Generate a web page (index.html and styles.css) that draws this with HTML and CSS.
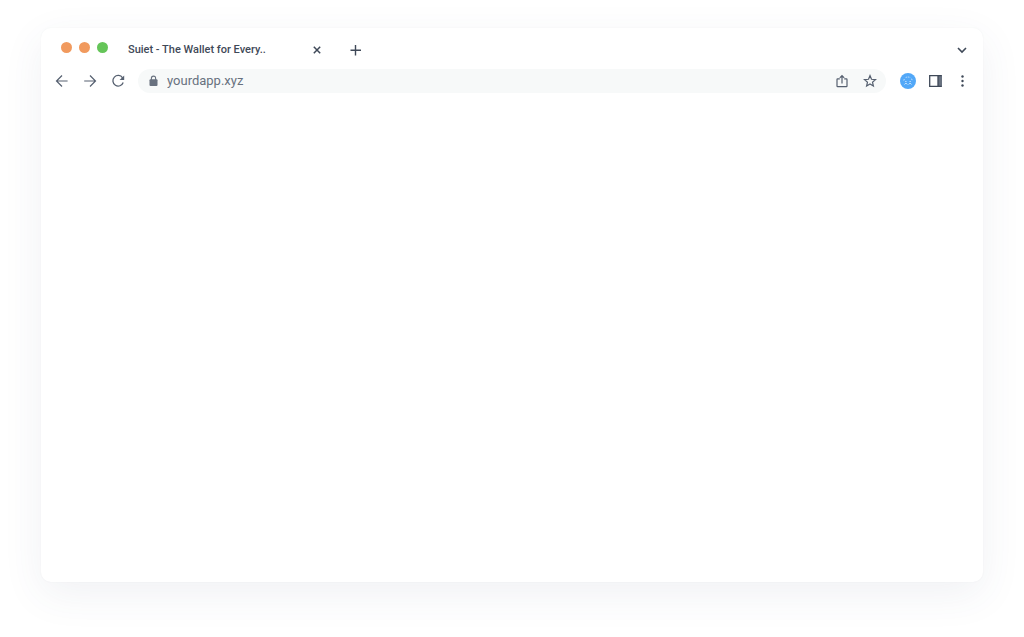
FILE: index.html
```html
<!DOCTYPE html>
<html lang="en">
<head>
<meta charset="utf-8">
<title>Suiet - The Wallet for Every..</title>
<link rel="stylesheet" href="styles.css">
</head>
<body>
<div class="window">
  <header class="tab-bar">
    <div class="lights">
      <button class="light" aria-label="Close window"></button>
      <button class="light" aria-label="Minimize window"></button>
      <button class="light light-green" aria-label="Maximize window"></button>
    </div>
    <div class="tab">
      <span class="tab-title">Suiet - The Wallet for Every..</span>
      <button class="icon dark" aria-label="Close tab"><svg viewBox="0 0 16 16"><path d="M4.8 4.8l6.4 6.4M11.2 4.8l-6.4 6.4" stroke-width="1.5"/></svg></button>
    </div>
    <button class="icon dark" aria-label="New tab"><svg viewBox="0 0 16 16"><path d="M7.500 3v10.500M2.500 8.300h10.500" stroke-width="1.400"/></svg></button>
    <button class="icon dark tab-list" aria-label="Search tabs"><svg viewBox="0 0 16 16"><path d="M4 6l4 4 4-4" stroke-width="1.6"/></svg></button>
  </header>
  <nav class="toolbar">
    <div class="history">
      <button class="icon" aria-label="Back"><svg viewBox="0 0 16 16"><path d="M13.600 8H2.500M8 2.500L2.500 8 8 13.500" stroke-width="1.200"/></svg></button>
      <button class="icon" aria-label="Forward"><svg viewBox="0 0 16 16"><path d="M2.200 8h11.300M8 2.500L13.500 8 8 13.500" stroke-width="1.200"/></svg></button>
      <button class="icon" aria-label="Reload"><svg viewBox="0 0 16 16"><path d="M12.600 4.800A5.300 5.300 0 1 0 13.200 9.500" stroke-width="1.300"/><path class="solid" d="M14.200 2.400V7H9.600z"/></svg></button>
    </div>
    <div class="address">
      <svg class="lock" viewBox="0 0 10 12"><rect class="solid" x="1.500" y="4.300" width="8" height="6.700" rx="1"/><path d="M3.400 5V3.200a2.100 2.100 0 0 1 4.200 0V5" stroke-width="1.100"/></svg>
      <input class="url" type="text" value="yourdapp.xyz" aria-label="Address" spellcheck="false">
      <button class="icon" aria-label="Share"><svg viewBox="0 0 16 16"><path d="M5.800 5.800H3.600Q3 5.800 3 6.400v6.700q0 .6.600.6h8.800q.6 0 .6-.6V6.400q0-.6-.6-.6h-2.200M8 10.500V3M5.800 4.800L8 2.600l2.200 2.200" stroke-width="1.200"/></svg></button>
      <button class="icon" aria-label="Bookmark"><svg viewBox="0 0 16 16"><path d="M8 2.600l1.500 3.700 4 .3-3 2.600.9 3.900L8 11l-3.400 2.100.9-3.900-3-2.600 4-.3z" stroke-width="1.200"/></svg></button>
    </div>
    <div class="extensions">
      <button class="icon" aria-label="Suiet wallet"><svg viewBox="0 0 16 16"><circle cx="8" cy="8" r="8" fill="#52a8f8" stroke="none"/><g stroke="#c5e2fc" stroke-width="1"><path d="M3.800 7.500l.6-1.800M5.700 4.500q2.300-.9 4.600 0M11.600 5.700l.6 1.800" stroke-dasharray="1.500 .7"/><path d="M5.200 8.500h1.300M9.500 8.500h1.300M4.500 11.500l1.400-1.500 1.400 1.500M8.700 11.500l1.400-1.500 1.400 1.500"/></g></svg></button>
      <button class="icon dark" aria-label="Side panel"><svg viewBox="0 0 16 16"><path class="panel" d="M11 2h4v12h-4z"/><path d="M2.700 2.700h11.800M2.700 13.300h11.800M2.700 2.100v11.800M11 2.700v10.600" stroke-width="1.300"/></svg></button>
      <button class="icon dark" aria-label="Menu"><svg viewBox="0 0 16 16"><g class="solid"><circle cx="8.500" cy="3.500" r="1.200"/><circle cx="8.500" cy="8" r="1.200"/><circle cx="8.500" cy="12.500" r="1.200"/></g></svg></button>
    </div>
  </nav>
  <main class="page"></main>
</div>
</body>
</html>
```
FILE: styles.css
```css
* { box-sizing: border-box; }
body {
  margin: 0;
  min-height: 100vh;
  padding: 28px 41px 55px;
  display: flex;
  background: #fff;
  font-family: Roboto, sans-serif;
}
.window {
  flex: 1;
  display: flex;
  flex-direction: column;
  border-radius: 10px;
  background: #fff;
  box-shadow: 0 0 2px rgba(60, 80, 110, .06), 0 12px 40px rgba(60, 80, 110, .08);
}
button {
  padding: 0;
  border: 0;
  background: none;
}
svg {
  display: block;
  width: 100%;
  height: 100%;
  fill: none;
  stroke: currentColor;
}
.solid { fill: currentColor; stroke: none; }
.panel { fill: #68717f; stroke: none; }
.icon {
  flex: none;
  width: 16px;
  height: 16px;
  color: #566070;
}
.dark { color: #3f4958; }
.tab-bar {
  display: flex;
  align-items: center;
  padding: 3px 13px 0 20px;
  height: 41px;
}
.lights {
  display: flex;
  gap: 7px;
  padding-bottom: 5px;
}
.light {
  width: 11px;
  height: 11px;
  border-radius: 50%;
  background: #f19a5e;
}
.light-green { background: #65c559; }
.tab {
  display: flex;
  align-items: center;
  justify-content: space-between;
  width: 197px;
  margin: 0 23px 0 20px;
}
.tab-title {
  color: #3f4958;
  font-size: 11px;
  font-weight: 500;
  line-height: 16px;
  padding-bottom: 1px;
}
.tab-list { margin-left: auto; }
.toolbar {
  display: flex;
  align-items: center;
  padding: 0 13px;
}
.history {
  display: flex;
  gap: 12px;
}
.address {
  flex: 1;
  display: flex;
  align-items: center;
  gap: 12px;
  height: 24px;
  margin: 0 14px 0 12px;
  padding: 0 8px 0 10px;
  border-radius: 12px;
  background: #f7f9f9;
}
.lock {
  flex: none;
  width: 10px;
  height: 12px;
  color: #68717f;
}
.url {
  flex: 1;
  min-width: 0;
  margin-left: -3px;
  padding: 0;
  border: 0;
  outline: 0;
  background: none;
  color: #68717f;
  font: 13px/16px Roboto, sans-serif;
}
.extensions {
  display: flex;
  gap: 11px;
}
.page { flex: 1; }
```
